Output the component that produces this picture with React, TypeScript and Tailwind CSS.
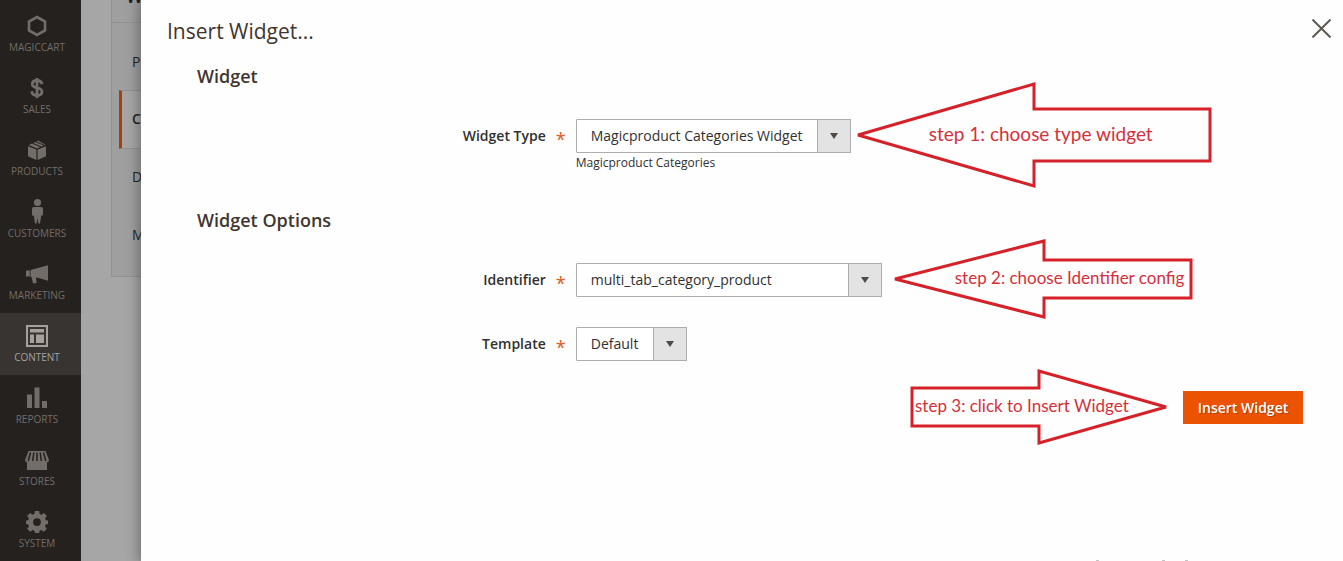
import React, { useState } from "react";

type MenuItem = { label: string; icon: React.ReactNode; active?: boolean };

const menu: MenuItem[] = [
  { label: "MAGICCART", icon: <path d="M12 3 20 7.500v9L12 21 4 16.500v-9z" fill="none" stroke="currentColor" strokeWidth="2.600" /> },
  {
    label: "SALES",
    icon: (
      <path
        d="M17 8.2C16.600 5.500 14.800 4.500 12 4.500c-3 0-4.700 1.500-4.700 3.700 0 5 9.700 2.300 9.700 7.400 0 2.500-2 3.900-5 3.900-3.200 0-5-1.500-5.400-4.200M12 2v20"
        fill="none"
        stroke="currentColor"
        strokeWidth="2.800"
      />
    ),
  },
  {
    label: "PRODUCTS",
    icon: (
      <g fill="currentColor">
        <path d="M3 8.300 11.400 11.600V22L3 18.200zM21 8.300 12.600 11.600V22L21 18.200z" />
        <path d="M3.700 7 7 5.500 15.300 9 12 10.400zM8.200 5 10.300 4 18.700 7.400 16.500 8.400zM11.400 3.500 13 2.600 20.500 6.700 19.800 7z" />
      </g>
    ),
  },
  {
    label: "CUSTOMERS",
    icon: (
      <g fill="currentColor">
        <circle cx="12.500" cy="2.500" r="3.600" />
        <path d="M9 7h7c1.300 0 2 .8 2 2v6.500h-1.800L15 23.500h-1.600L12.500 18l-1 5.500H10L8.800 15.500H7V9c0-1.200.7-2 2-2z" />
      </g>
    ),
  },
  {
    label: "MARKETING",
    icon: (
      <g fill="currentColor">
        <path d="M1 8.500h3.800v6H1zM5.500 8 23 3.200v15.600L13 15.800l-2-.3.500 5.600-3.400.3-1.600-6.300-1-.4z" />
      </g>
    ),
  },
  {
    label: "CONTENT",
    active: true,
    icon: (
      <g fill="currentColor">
        <path d="M1 1h22v22H1zM3 3v18h18V3z" fillRule="evenodd" />
        <path d="M5 5h14v3.500H5zM5 10.500h4V19H5zM11 10.500h8V19h-8z" />
      </g>
    ),
  },
  { label: "REPORTS", icon: <path d="M2 8.500h5V22H2zM9.500 1.500h5V22h-5zM17 15h5v7h-5z" fill="currentColor" /> },
  {
    label: "STORES",
    icon: (
      <g fill="currentColor">
        <path d="M3.500 3h17l3.500 9c0 1.500-1 2.200-2 2.200V22H2v-7.800c-1 0-2-.7-2-2.200z" />
        <path d="M5.500 4.500 3.200 13M8.800 4.500 7.700 13M12 4.500V13M15.200 4.500 16.300 13M18.500 4.500 20.800 13" stroke="#25211e" strokeWidth="1.500" />
      </g>
    ),
  },
  {
    label: "SYSTEM",
    icon: (
      <path
        fill="currentColor"
        fillRule="evenodd"
        d="M9.900 1h4.200l.5 3 1.800.8 2.500-1.800 3 3-1.800 2.500.8 1.800 2.100.2v3.400l-2.300.7-.7 1.800 1.900 2.400-3 3-2.500-1.700-1.800.7-.5 2.200H9.900l-.5-2.200-1.800-.7-2.500 1.700-3-3L4 16.400l-.7-1.800-2.300-.7v-3.400l2.100-.2.8-1.800L2.100 6l3-3 2.500 1.800L9.400 4zM12 8.200a3.900 3.900 0 1 0 0 7.800 3.900 3.900 0 0 0 0-7.800z"
      />
    ),
  },
];

function Sidebar() {
  return (
    <nav aria-label="Main" className="w-[81px] shrink-0 bg-[#25211e] pt-[3px]">
      {menu.map((item) => (
        <a
          key={item.label}
          href="#"
          className={
            item.active
              ? "flex h-[62px] w-full flex-col items-center bg-[#383431] pt-[11px] pr-[7px] text-[#a6a19c]"
              : "flex h-[62px] w-full flex-col items-center pt-[11px] pr-[7px] text-[#726d68]"
          }
        >
          <svg viewBox="0 0 24 24" className="size-6 overflow-visible" aria-hidden="true">
            {item.icon}
          </svg>
          <span className="text-[10px] leading-[18px]">{item.label}</span>
        </a>
      ))}
    </nav>
  );
}

function BackdropPage() {
  return (
    <div className="min-w-0 flex-1 bg-[#a6a6a6] pl-[30px]">
      <div className="h-[277px] border-b border-l border-[#929292] bg-[#9f9f9f] text-sm text-[#242424]">
        <div className="flex h-[23px] items-start overflow-hidden border-b border-[#929292] pl-[14px]">
          <span className="-mt-4 text-lg leading-6 font-semibold">W</span>
        </div>
        <ul className="pt-[9px] pl-[7px]">
          <li className="flex h-[58px] items-center pt-[2px] pl-[13px]">P</li>
          <li className="flex h-[59px] items-center border-y border-l-3 border-y-[#929292] border-l-[#a3410f] bg-[#a6a6a6] pb-[2px] pl-[10px] font-semibold">C</li>
          <li className="flex h-[58px] items-center pb-[2px] pl-[13px]">D</li>
          <li className="flex h-[58px] items-center pb-[2px] pl-[13px]">M</li>
        </ul>
      </div>
    </div>
  );
}

type CalloutProps = { text: string; points: string; box: string; size: string; textStyle: string };

function Callout({ text, points, box, size, textStyle }: CalloutProps) {
  return (
    <div className={`pointer-events-none absolute top-1/2 -mt-px flex -translate-y-1/2 items-center pb-[2px] ${size}`}>
      <svg viewBox={box} className="absolute inset-0 size-full overflow-visible" aria-hidden="true">
        <polygon points={points} fill="none" stroke="#d5222a" strokeWidth="3" strokeMiterlimit="2" />
      </svg>
      <span className={`relative font-[Lato,sans-serif] leading-6 whitespace-nowrap text-[#d5303a] ${textStyle}`}>{text}</span>
    </div>
  );
}

type FieldProps = {
  id: string;
  label: string;
  options: string[];
  width: string;
  note?: string;
  children?: React.ReactNode;
};

function Field({ id, label, options, width, note, children }: FieldProps) {
  const [value, setValue] = useState(options[0]);
  return (
    <div className="grid grid-cols-[34%_1fr]">
      <label htmlFor={id} className="flex h-[34px] items-center justify-end gap-[10px] pr-3 text-sm font-semibold text-[#303030]">
        {label}
        <span className="w-2 pt-[6px] text-lg leading-5 font-normal text-[#e2571f]">*</span>
      </label>
      <div>
        <div className={`relative h-[34px] ${width}`}>
          <select
            id={id}
            value={value}
            onChange={(e) => setValue(e.target.value)}
            className="h-full w-full appearance-none rounded-[1px] border border-[#adadad] bg-white pr-[34px] pl-[14px] text-sm text-[#303030]"
          >
            {options.map((o) => (
              <option key={o}>{o}</option>
            ))}
          </select>
          <span className="pointer-events-none absolute inset-y-0 right-0 flex w-[34px] items-center justify-center border border-[#adadad] bg-[#e3e3e3]">
            <svg viewBox="0 0 8 6" className="h-[6px] w-2" aria-hidden="true">
              <path d="M0 0h8L4 6z" fill="#514943" />
            </svg>
          </span>
          {children}
        </div>
        {note && <p className="text-xs leading-5 text-[#303030]">{note}</p>}
      </div>
    </div>
  );
}

export default function App() {
  return (
    <div className="relative flex min-h-screen overflow-hidden font-['Open_Sans',sans-serif]">
      <Sidebar />
      <BackdropPage />
      <main
        role="dialog"
        aria-labelledby="dialog-title"
        className="absolute inset-y-0 right-0 left-[141px] overflow-hidden bg-[#fefefe] shadow-[0_0_12px_2px_rgba(0,0,0,0.35)]"
      >
        <header className="flex items-start justify-between pt-4 pr-3 pl-[26px]">
          <h1 id="dialog-title" className="text-[21px] leading-[30px] text-[#41362f]">
            Insert Widget...
          </h1>
          <button type="button" aria-label="Close" className="pt-[3px]">
            <svg viewBox="0 0 19 19" className="size-[19px]" aria-hidden="true">
              <path d="M.5.5l18 18M18.500.5l-18 18" stroke="#5f5853" strokeWidth="2" />
            </svg>
          </button>
        </header>
        <form onSubmit={(e) => e.preventDefault()} className="pr-8 pl-14">
          <section className="pt-[18px]">
            <h2 className="text-lg leading-6 font-semibold text-[#41362f]">Widget</h2>
            <div className="pt-[31px]">
              <Field id="widget-type" label="Widget Type" options={["Magicproduct Categories Widget"]} width="w-[275px]" note="Magicproduct Categories">
                <Callout
                  text="step 1: choose type widget"
                  box="0 0 355 106"
                  points="2,53 178,2 178,27 354,27 354,79 178,79 178,104"
                  size="left-full ml-[5px] h-[106px] w-[355px]"
                  textStyle="pl-[73px] text-[19px]"
                />
              </Field>
            </div>
          </section>
          <section className="pt-[35px]">
            <h2 className="text-lg leading-6 font-semibold text-[#41362f]">Widget Options</h2>
            <div className="flex flex-col gap-[30px] pt-[31px]">
              <Field id="identifier" label="Identifier" options={["multi_tab_category_product"]} width="w-[306px]">
                <Callout
                  text="step 2: choose Identifier config"
                  box="0 0 299 80"
                  points="2,40 151,2 151,21 298,21 298,59 151,59 151,78"
                  size="left-full ml-[11px] h-[80px] w-[299px]"
                  textStyle="pl-[62px] text-[17px]"
                />
              </Field>
              <Field id="template" label="Template" options={["Default"]} width="w-[111px]" />
            </div>
          </section>
          <div className="flex justify-end pt-[30px] pr-2">
            <div className="relative">
              <button
                type="submit"
                className="h-[33px] w-[120px] bg-[#eb5202] text-sm font-semibold text-white [text-shadow:1px_1px_0_rgba(0,0,0,0.25)]"
              >
                Insert Widget
              </button>
              <Callout
                text="step 3: click to Insert Widget"
                box="0 0 258 76"
                points="2,19 129,19 129,2 256,38 129,74 129,57 2,57"
                size="right-full mr-[15px] h-[76px] w-[258px]"
                textStyle="pl-[5px] text-[17px]"
              />
            </div>
          </div>
        </form>
        <svg viewBox="0 0 92 1" className="absolute right-[155px] bottom-0 h-px w-[92px]" aria-hidden="true">
          <path d="M0 0h3v1H0zM66 0h3v1h-3zM89 0h3v1h-3z" fill="#c4c4c4" />
        </svg>
      </main>
    </div>
  );
}
